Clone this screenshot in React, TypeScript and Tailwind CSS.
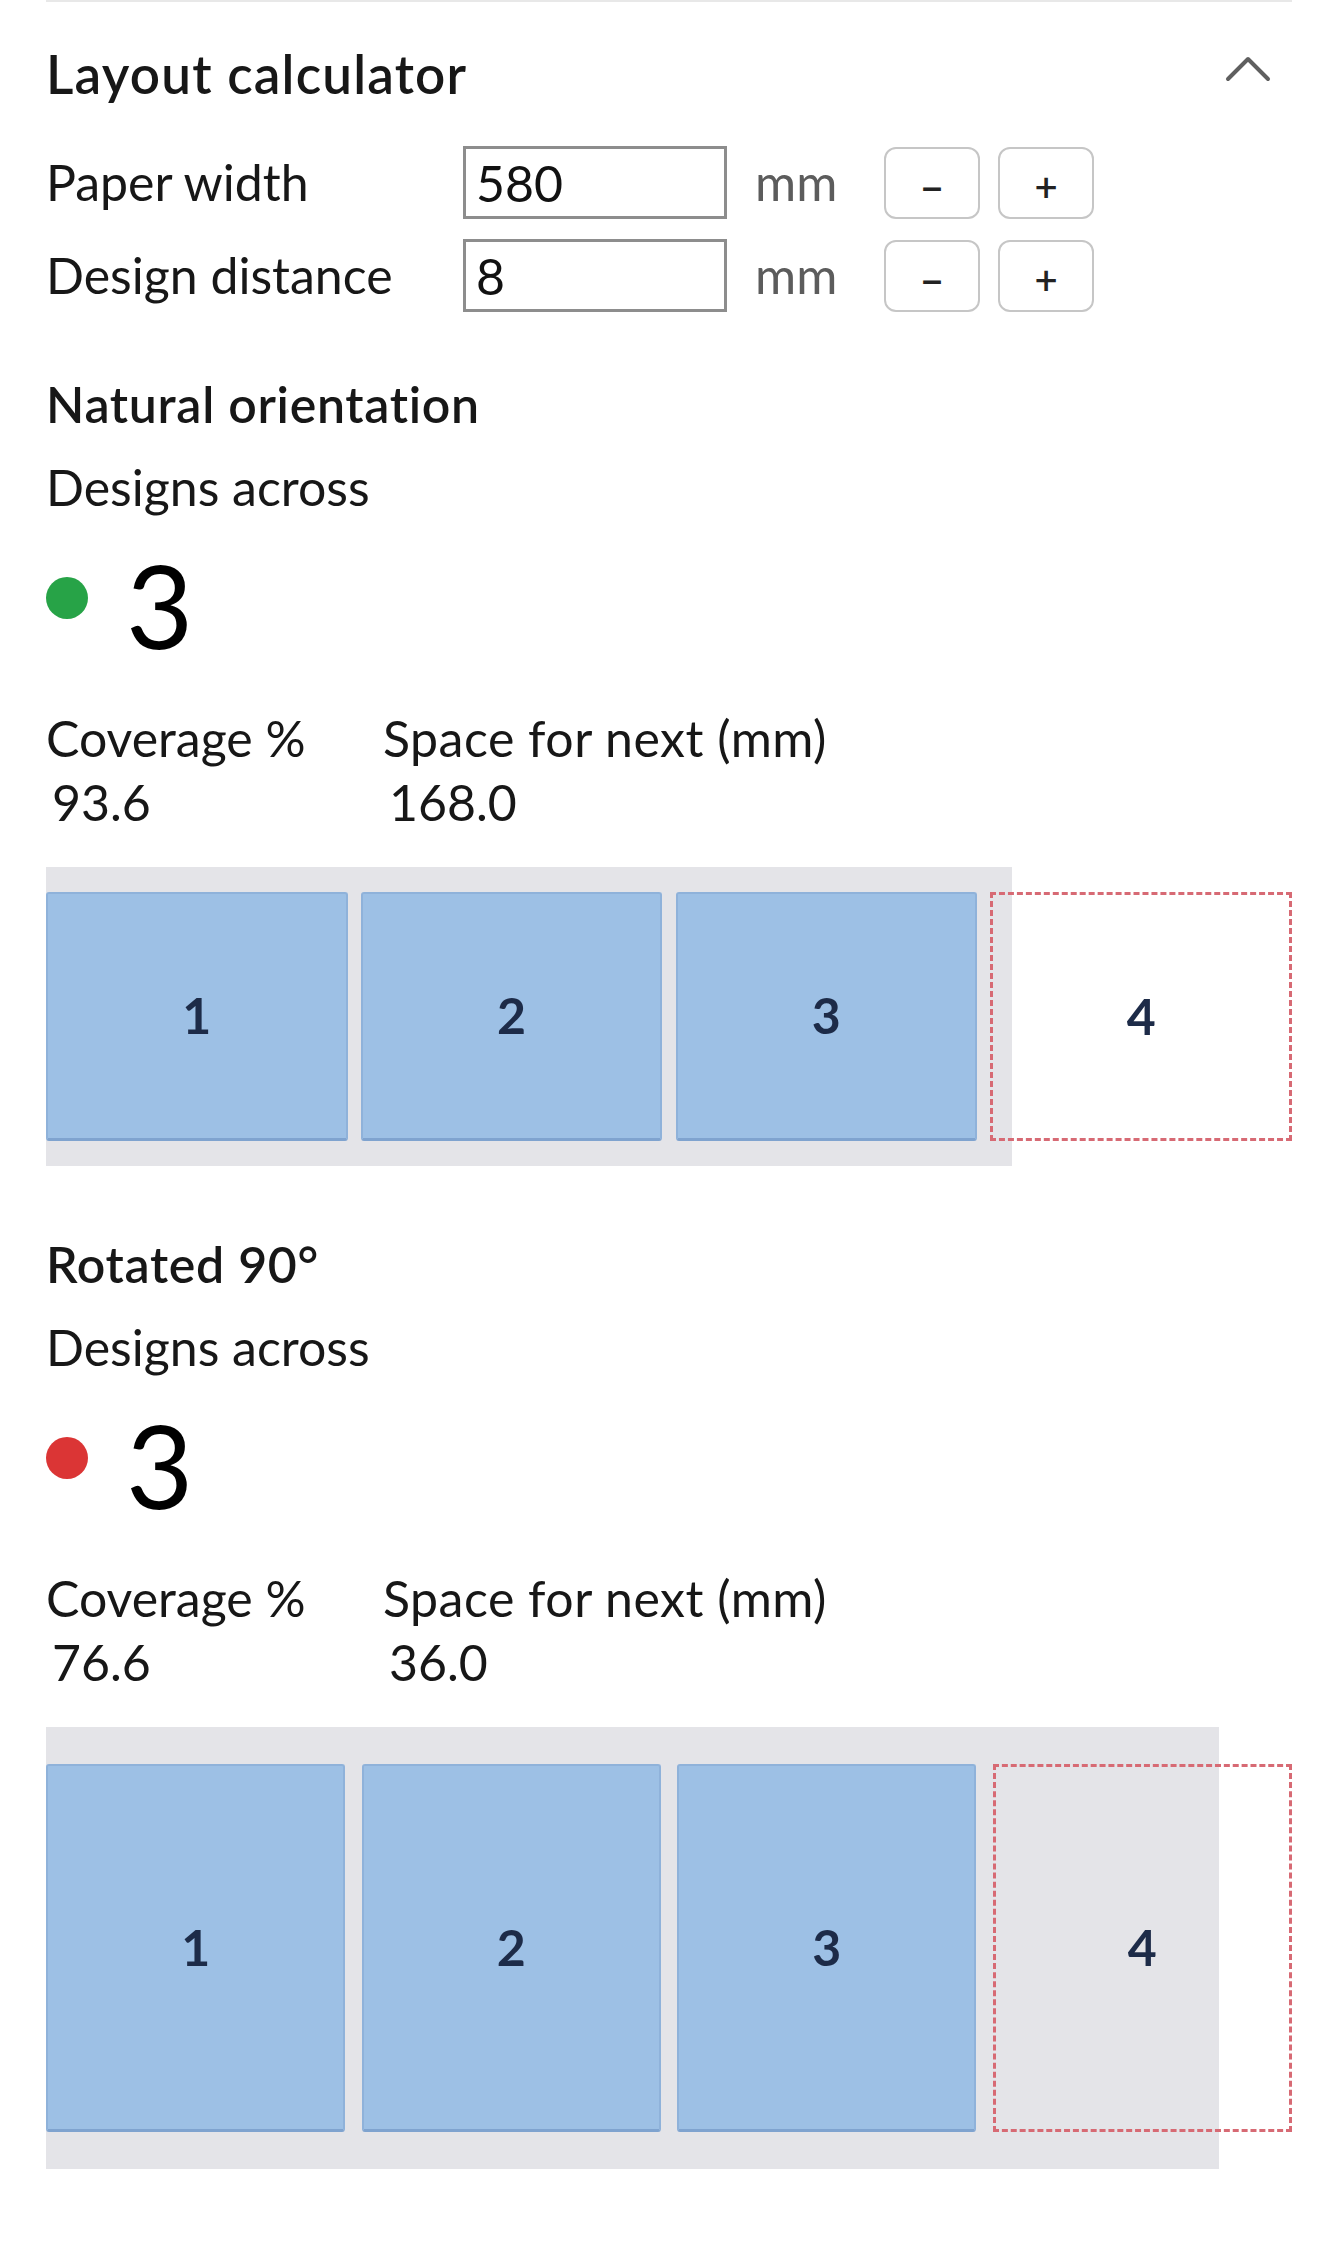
import React from 'react';

const PAPER_MM = 580;
const DISTANCE_MM = 8;
const DESIGN = { w: 181, h: 148 };
const TRACK_PX = 1246;

type Fit = {
  across: number;
  coverage: number;
  next: number;
  w: number;
  h: number;
};

// how many designs of width w fit across the paper, plus what the next one would need
const fitAcross = (w: number, h: number): Fit => {
  const across = Math.floor((PAPER_MM + DISTANCE_MM) / (w + DISTANCE_MM));
  const coverage = ((across * w) / PAPER_MM) * 100;
  const next = (across + 1) * w + across * DISTANCE_MM - PAPER_MM;
  return { across, coverage, next, w, h };
};

const Strip: React.FC<{ fit: Fit }> = ({ fit }) => {
  const totalMm = Math.max(PAPER_MM, (fit.across + 1) * fit.w + fit.across * DISTANCE_MM);
  const s = TRACK_PX / totalMm;
  const cellW = fit.w * s;
  const cellH = fit.h * s + 2.5;
  const gap = DISTANCE_MM * s;
  const pad = cellH * 0.1;

  return (
    <div
      className="bg-[#e4e4e8]"
      style={{ width: PAPER_MM * s, paddingTop: pad, paddingBottom: pad }}
    >
      <div className="flex" style={{ gap }}>
        {Array.from({ length: fit.across }, (_, i) => (
          <div
            key={i}
            className="flex shrink-0 items-center justify-center rounded-[3px] border-2 border-b-[3px] border-[#8fb2da] border-b-[#7fa3cf] bg-[#9dc0e5] text-[50px] font-bold text-[#1d2b48]"
            style={{ width: cellW, height: cellH }}
          >
            {i + 1}
          </div>
        ))}
        <div
          className="flex shrink-0 items-center justify-center border-[3px] border-dashed border-[#d76a74] text-[50px] font-bold text-[#1d2b48]"
          style={{ width: cellW, height: cellH }}
        >
          {fit.across + 1}
        </div>
      </div>
    </div>
  );
};

const Orientation: React.FC<{ title: string; fit: Fit; dot: string; className?: string }> = ({
  title,
  fit,
  dot,
  className,
}) => (
  <section className={className}>
    <h3 className="leading-[64px] font-semibold tracking-[0.7px]">{title}</h3>
    <p className="mt-[19px] leading-[64px]">Designs across</p>
    <div className="mt-[28px] flex h-[116px] items-center">
      <span className={`mb-[14px] size-[42px] shrink-0 rounded-full ${dot}`} />
      <span className="ml-[38px] text-[116px] leading-[116px] font-normal text-black">{fit.across}</span>
    </div>
    <div className="mt-[43px] grid grid-cols-[337px_1fr] leading-[64px]">
      <span>Coverage %</span>
      <span className="tracking-[0.5px]">Space for next (mm)</span>
      <span className="pl-[6px]">{fit.coverage.toFixed(1)}</span>
      <span className="pl-[6px]">{fit.next.toFixed(1)}</span>
    </div>
    <div className="mt-[33px]">
      <Strip fit={fit} />
    </div>
  </section>
);

const NumberRow: React.FC<{ label: string; value: number; className?: string }> = ({
  label,
  value,
  className,
}) => (
  <div className={`flex items-center ${className ?? ''}`}>
    <label className="w-[417px] shrink-0">{label}</label>
    <input
      defaultValue={value}
      className="h-[73px] w-[264px] shrink-0 border-[3px] border-[#8d8d8d] bg-white px-[10px] text-[50px] leading-none text-[#111] outline-none"
    />
    <span className="ml-[28px] w-[129px] shrink-0 text-[#5c5c5c]">mm</span>
    <div className="flex gap-[18px]">
      <button className="flex h-[72px] w-[96px] items-center justify-center rounded-[12px] border-2 border-[#c6c6c6] bg-white pt-[6px] text-[44px] leading-none font-semibold text-[#222]">
        –
      </button>
      <button className="flex h-[72px] w-[96px] items-center justify-center rounded-[12px] border-2 border-[#c6c6c6] bg-white pt-[6px] text-[40px] leading-none font-semibold text-[#222]">
        +
      </button>
    </div>
  </div>
);

export default function App() {
  const natural = fitAcross(DESIGN.w, DESIGN.h);
  const rotated = fitAcross(DESIGN.h, DESIGN.w);

  return (
    <div className="min-h-[2266px] w-full bg-white font-['Lato','Noto_Sans',sans-serif] text-[50px] text-[#171717]">
      <div className="ml-[46px] w-[1246px] border-t-2 border-[#e8e8e8]">
        {/* Header */}
        <div className="mt-[40px] flex h-[64px] items-center justify-between">
          <h2 className="text-[53px] leading-[64px] font-semibold tracking-[1.2px]">Layout calculator</h2>
          <svg
            width="46"
            height="27"
            viewBox="0 0 46 27"
            className="mr-[21px] mb-[12px]"
            fill="none"
            stroke="#5f5f5f"
            strokeWidth="4"
            strokeLinecap="round"
            strokeLinejoin="round"
          >
            <path d="M3 24 L23 4 L43 24" />
          </svg>
        </div>

        {/* Inputs */}
        <NumberRow label="Paper width" value={PAPER_MM} className="mt-[39px]" />
        <NumberRow label="Design distance" value={DISTANCE_MM} className="mt-[18px]" />

        <Orientation title="Natural orientation" fit={natural} dot="bg-[#27a347]" className="mt-[59px]" />
        <Orientation title="Rotated 90°" fit={rotated} dot="bg-[#db3535]" className="mt-[66px]" />
      </div>
    </div>
  );
}
